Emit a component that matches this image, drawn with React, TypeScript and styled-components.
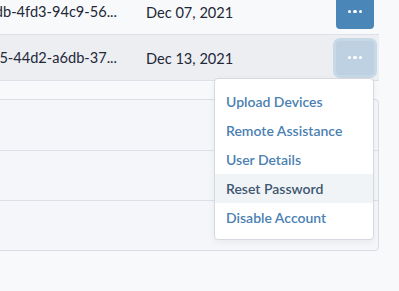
import React from 'react';
import styled, { createGlobalStyle } from 'styled-components';

const Global = createGlobalStyle`
  html, body { margin: 0; padding: 0; background: #f8f9fb; }
  body { font-family: Lato, "Noto Sans", sans-serif; -webkit-font-smoothing: antialiased; }
  * { box-sizing: border-box; }
`;

const Viewport = styled.div`
  width: 399px;
  height: 291px;
  overflow: hidden;
`;

const Content = styled.div`
  width: 479px;
  margin-left: -100px;
  margin-top: -11px;
  display: flex;
  flex-direction: column;
`;

const Table = styled.div`
  display: flex;
  flex-direction: column;
`;

const Row = styled.div<{ $active?: boolean }>`
  position: relative;
  display: grid;
  grid-template-columns: 217px 1fr 38px;
  align-items: center;
  height: 46px;
  padding-right: 5px;
  background: ${(p) => (p.$active ? '#eceef2' : '#f8f9fa')};
  border-bottom: 1px solid #dde0e6;
`;

const IdCell = styled.div`
  text-align: right;
  white-space: nowrap;
  overflow: hidden;
  font-size: 14.6px;
  color: #232838;
`;

const DateCell = styled.div`
  padding-left: 29px;
  padding-top: 1px;
  font-size: 14.6px;
  color: #232838;
  white-space: nowrap;
`;

const DotsButton = styled.button<{ $open?: boolean }>`
  width: 38px;
  height: 34px;
  border: none;
  border-radius: 4px;
  padding: 0;
  display: flex;
  align-items: center;
  justify-content: center;
  gap: 2px;
  background: ${(p) => (p.$open ? '#bdd1e2' : '#4a86b8')};
  box-shadow: ${(p) => (p.$open ? '0 0 0 3px #c7d8e7' : 'none')};
  cursor: pointer;
`;

const Dot = styled.span`
  width: 3.5px;
  height: 3.5px;
  border-radius: 50%;
  background: #ffffff;
`;

const Menu = styled.div`
  position: absolute;
  top: 43px;
  right: 5px;
  width: 160px;
  padding: 8px 0 7px;
  background: #ffffff;
  border: 1px solid #d6dae0;
  border-radius: 4px;
  box-shadow: 0 2px 6px rgba(30, 40, 60, 0.06);
  z-index: 2;
  display: flex;
  flex-direction: column;
`;

const MenuItem = styled.div<{ $hover?: boolean }>`
  height: 29px;
  line-height: 29px;
  padding: 0 11px;
  font-size: 14px;
  font-weight: 600;
  color: ${(p) => (p.$hover ? '#3e5670' : '#4b80b2')};
  background: ${(p) => (p.$hover ? '#f1f4f7' : 'transparent')};
  white-space: nowrap;
`;

const Card = styled.div`
  margin-top: 18px;
  background: #f5f6f9;
  border: 1px solid #d9dce2;
  border-radius: 4px;
  display: flex;
  flex-direction: column;
`;

const CardRow = styled.div`
  height: 50px;
  & + & {
    border-top: 1px solid #dcdfe5;
  }
`;

const rows = [
  { id: 'e4a1c2db-4fd3-94c9-56...', date: 'Dec 07, 2021' },
  { id: '9c0e7b15-44d2-a6db-37...', date: 'Dec 13, 2021', open: true },
];

const menuItems = ['Upload Devices', 'Remote Assistance', 'User Details', 'Reset Password', 'Disable Account'];

export default function App() {
  return (
    <>
      <Global />
      <Viewport>
        <Content>
          <Table>
            {rows.map((r) => (
              <Row key={r.id} $active={r.open}>
                <IdCell>{r.id}</IdCell>
                <DateCell>{r.date}</DateCell>
                <DotsButton $open={r.open} aria-label="Actions">
                  <Dot />
                  <Dot />
                  <Dot />
                </DotsButton>
                {r.open && (
                  <Menu>
                    {menuItems.map((m) => (
                      <MenuItem key={m} $hover={m === 'Reset Password'}>
                        {m}
                      </MenuItem>
                    ))}
                  </Menu>
                )}
              </Row>
            ))}
          </Table>
          <Card>
            <CardRow />
            <CardRow />
            <CardRow />
          </Card>
        </Content>
      </Viewport>
    </>
  );
}
